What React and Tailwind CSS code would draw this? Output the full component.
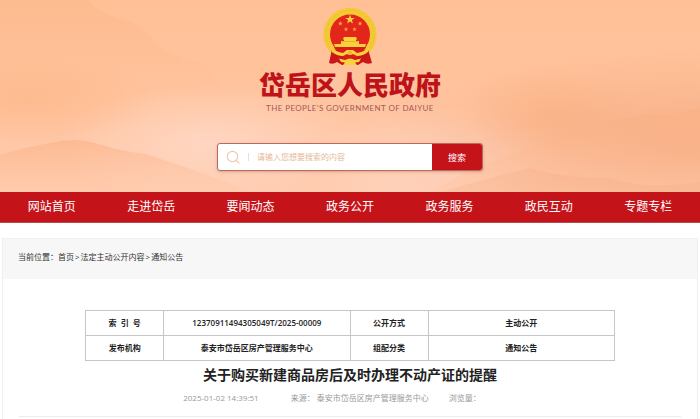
import React, { useState } from 'react';

const navItems = ['网站首页', '走进岱岳', '要闻动态', '政务公开', '政务服务', '政民互动', '专题专栏'];

const crumbs = ['首页', '法定主动公开内容', '通知公告'];

const infoRows = [
  ['索  引  号', '12370911494305049T/2025-00009', '公开方式', '主动公开'],
  ['发布机构', '泰安市岱岳区房产管理服务中心', '组配分类', '通知公告'],
];

const star = (cx, cy, r) =>
  Array.from({ length: 10 }, (_, i) => {
    const a = (Math.PI / 5) * i - Math.PI / 2;
    const d = i % 2 ? r * 0.4 : r;
    return `${cx + d * Math.cos(a)},${cy + d * Math.sin(a)}`;
  }).join(' ');

function Emblem() {
  return (
    <svg viewBox="0 0 56 58" className="w-14 h-[58px]" aria-hidden="true">
      {/* wheat ring */}
      <circle cx="28" cy="26.5" r="23.3" fill="#e3261c" stroke="#f5c935" strokeWidth="6.6" />
      <circle cx="28" cy="26.5" r="24" fill="none" stroke="#efba2b" strokeWidth="1.2" strokeDasharray="1.2 2.2" />
      {/* ribbons */}
      <path d="M10 41Q18 46 28 46T46 41L50 55Q45 57 41 54L36 57H20L15 54Q11 57 7 55Z" fill="#cb171a" />
      <path d="M12 39h32l-3 6q-6 6-13 6t-13-6z" fill="#d81e1b" />
      <polygon points={star(28, 11.5, 5)} fill="#f8d23a" />
      <polygon points={star(18.3, 15.5, 2.6)} fill="#f7a545" />
      <polygon points={star(38, 15.5, 2.6)} fill="#f7a545" />
      <polygon points={star(24, 21.3, 2.3)} fill="#f7a545" />
      <polygon points={star(32.5, 21.3, 2.3)} fill="#f7a545" />
      {/* gate tower */}
      <path d="M22 29h12l1 2-1 1v1h3v3h7l-1 3H13l-1-3h7v-3h3v-1l-1-1z" fill="#f8d23a" />
      <path d="M20 33.5h16" stroke="#eda52a" strokeWidth="0.8" />
      {/* cog wheel and knots */}
      <path d="M8 39q6 5 13 6l4-3h6l4 3q7-1 13-6l-2 5q-5 4-11 4l-4-2q-3 2-6 0l-4 2q-6 0-11-4z" fill="#f8d23a" />
      <path d="M17 50.5l6 1.5q5-3 10 0l6-1.5-2 3.5-4 .5 2 2.5H21l2-2.5-4-.5z" fill="#f8d23a" />
      <circle cx="28" cy="44.5" r="2" fill="#f0b62c" />
    </svg>
  );
}

function Hills() {
  return (
    <svg viewBox="0 0 700 192" preserveAspectRatio="none" className="absolute inset-0 size-full" aria-hidden="true">
      <defs>
        <linearGradient id="sky" x1="0" y1="0" x2="0" y2="1">
          <stop offset="0" stopColor="#ffc096" />
          <stop offset="0.45" stopColor="#ffc39d" />
          <stop offset="1" stopColor="#ffccb0" />
        </linearGradient>
        <linearGradient id="ridge" x1="0" y1="0" x2="0" y2="1">
          <stop offset="0" stopColor="#faae80" stopOpacity="0.55" />
          <stop offset="1" stopColor="#ffc4a0" stopOpacity="0.2" />
        </linearGradient>
        <linearGradient id="far" x1="0" y1="0" x2="0" y2="1">
          <stop offset="0" stopColor="#fab080" stopOpacity="0.3" />
          <stop offset="1" stopColor="#fab080" stopOpacity="0" />
        </linearGradient>
        <radialGradient id="east" cx="1" cy="0.75" r="0.5">
          <stop offset="0" stopColor="#ef9a6c" stopOpacity="0.6" />
          <stop offset="1" stopColor="#f4a376" stopOpacity="0" />
        </radialGradient>
        <radialGradient id="glow">
          <stop offset="0" stopColor="#ffd6c2" />
          <stop offset="1" stopColor="#ffd6c2" stopOpacity="0" />
        </radialGradient>
        <radialGradient id="haze">
          <stop offset="0" stopColor="#fdae79" stopOpacity="0.4" />
          <stop offset="1" stopColor="#fdae79" stopOpacity="0" />
        </radialGradient>
      </defs>
      <rect width="700" height="192" fill="url(#sky)" />
      <ellipse cx="210" cy="145" rx="150" ry="60" fill="url(#glow)" />
      <ellipse cx="440" cy="165" rx="130" ry="60" fill="url(#glow)" />
      <ellipse cx="30" cy="100" rx="130" ry="45" fill="url(#haze)" />
      <ellipse cx="550" cy="112" rx="90" ry="45" fill="url(#haze)" />
      <path d="M0 0H88Q98 13 125 20Q145 26 155 42Q165 56 205 64L230 100H0Z" fill="url(#far)" />
      <rect width="700" height="192" fill="url(#east)" />
      <path d="M0 155Q30 146 50 143Q75 137 95 143Q120 151 145 154Q180 165 208 175L250 192H0Z" fill="url(#ridge)" />
      <path d="M510 155Q570 132 620 120Q640 113 665 115L700 108V192H430Q470 168 510 155Z" fill="url(#ridge)" />
      <path d="M440 192Q490 178 530 168Q560 178 610 178Q640 190 700 182V192Z" fill="#f5a577" opacity="0.2" />
    </svg>
  );
}

function SearchBar() {
  const [keyword, setKeyword] = useState('');

  return (
    <form
      onSubmit={(e) => e.preventDefault()}
      className="flex w-[38%] h-7 mx-auto rounded-[3px] border border-[#b86a62] bg-white overflow-hidden shadow-sm shadow-[#c98a6a]/50"
    >
      <div className="flex flex-1 min-w-0 items-center pl-2">
        <svg viewBox="0 0 14 14" className="size-3.5 shrink-0" fill="none" stroke="#f0c8ac" strokeWidth="1.2" aria-hidden="true">
          <circle cx="6.5" cy="6.5" r="5.2" />
          <path d="M10.3 10.3L13 13" strokeLinecap="round" />
        </svg>
        <span className="w-px h-2 mx-2 bg-[#f3dccb]" />
        <input
          type="text"
          aria-label="搜索"
          value={keyword}
          onChange={(e) => setKeyword(e.target.value)}
          placeholder="请输入您想要搜索的内容"
          className="flex-1 min-w-0 text-[8px] text-gray-700 outline-none placeholder:text-[#e6b796]"
        />
      </div>
      <button type="submit" className="w-[50px] pt-0.5 bg-[#c5131a] text-[9px] text-white">
        搜索
      </button>
    </form>
  );
}

export default function App() {
  return (
    <div className="bg-white font-['Open_Sans','Noto_Sans_CJK_SC',sans-serif] text-[8px] text-[#333]">
      <header className="relative">
        <Hills />
        <div className="relative flex flex-col items-center pt-2 pb-[21px]">
          <Emblem />
          <h1 className="mt-1.5 text-[26px] leading-[27px] font-black text-[#be131b]">岱岳区人民政府</h1>
          <p className="mt-1 mb-[30px] font-['Lato',sans-serif] text-[8px] leading-[10px] tracking-wider text-[#a8585a]">
            THE PEOPLE'S GOVERNMENT OF DAIYUE
          </p>
          <div className="w-full">
            <SearchBar />
          </div>
        </div>
      </header>

      <nav className="grid grid-cols-7 px-0.5 bg-[#c5131a] border-b border-[#b54a4c]">
        {navItems.map((item) => (
          <a key={item} href="#" className="text-center text-[12px] leading-[30px] text-white">
            {item}
          </a>
        ))}
      </nav>

      <main className="mx-0.5 mt-[15px] pb-4 border border-[#f0f0f0]">
        <div className="flex items-center h-10 px-[15px] pb-1 bg-[#f7f7f7]">
          <span>当前位置：</span>
          {crumbs.map((crumb, i) => (
            <React.Fragment key={crumb}>
              {i > 0 && <span className="px-px">&gt;</span>}
              <a href="#">{crumb}</a>
            </React.Fragment>
          ))}
        </div>

        <article className="mx-4 pt-[31px] border-b border-[#ececec]">
          <table className="w-4/5 mx-auto table-fixed border-collapse text-center font-semibold text-[#222]">
            <colgroup>
              <col className="w-[78px]" />
              <col />
              <col className="w-[78px]" />
              <col />
            </colgroup>
            <tbody>
              {infoRows.map((row) => (
                <tr key={row[1]} className="h-[25px]">
                  {row.map((cell) => (
                    <td key={cell} className="border border-[#c6c6c6] whitespace-pre">
                      {cell}
                    </td>
                  ))}
                </tr>
              ))}
            </tbody>
          </table>
          <h2 className="mt-1 text-center text-[14px] leading-5 font-bold text-[#222]">
            关于购买新建商品房后及时办理不动产证的提醒
          </h2>
          <div className="flex justify-center mt-[7px] pr-9 pb-3 text-[#999]">
            <time>2025-01-02 14:39:51</time>
            <span className="ml-8">来源： 泰安市岱岳区房产管理服务中心</span>
            <span className="ml-5">浏览量：</span>
          </div>
        </article>
      </main>
    </div>
  );
}
